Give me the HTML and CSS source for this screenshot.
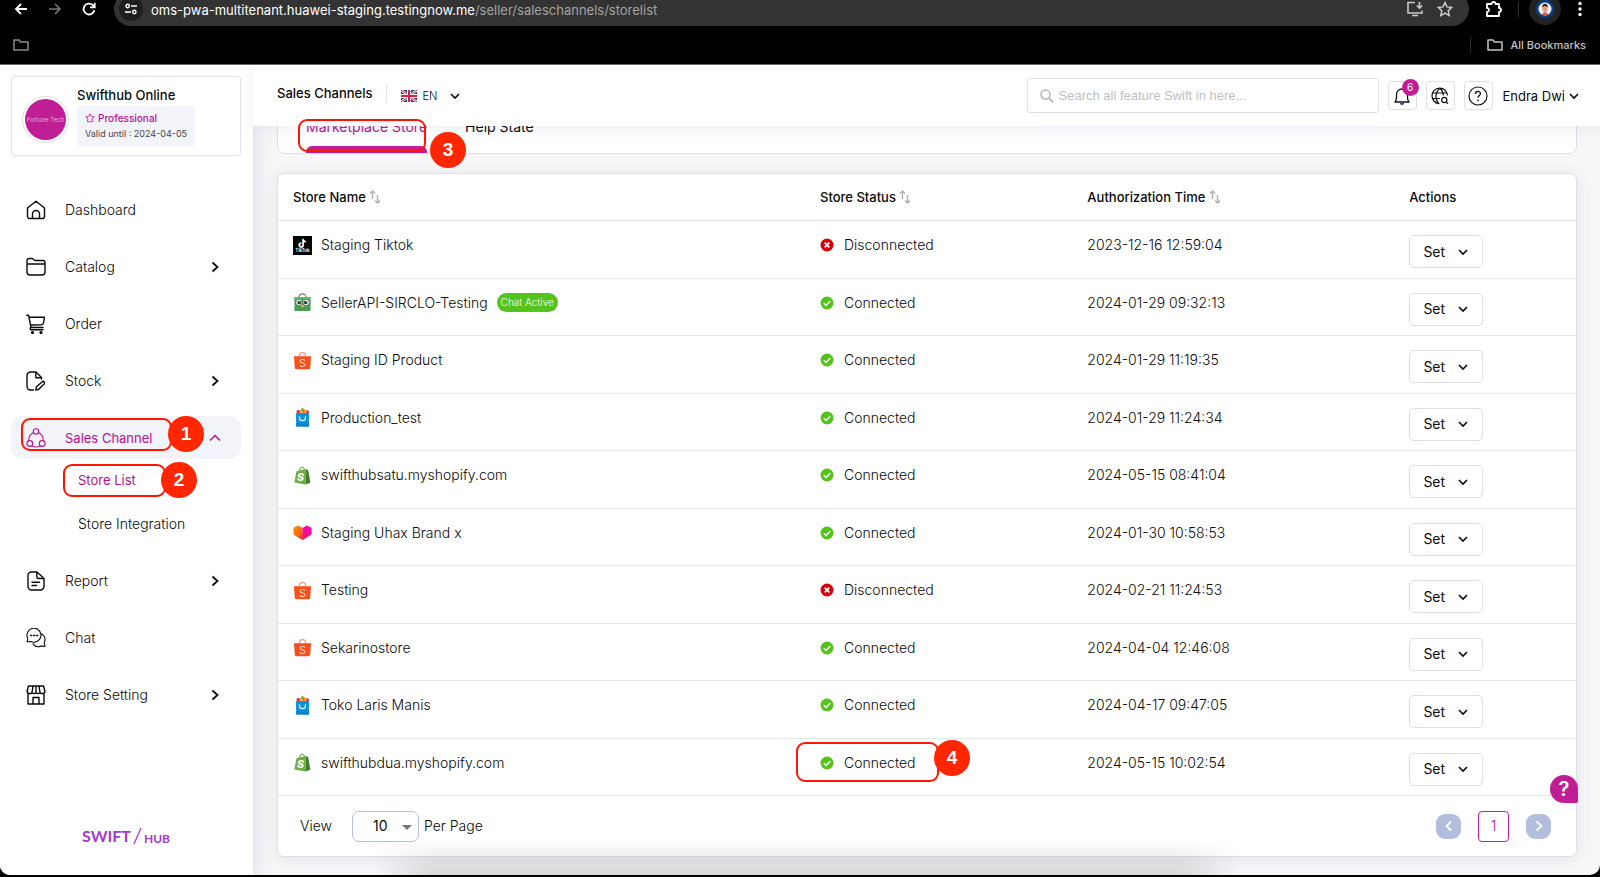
FILE: index.html
```html
<!DOCTYPE html>
<html lang="en">
<head>
<meta charset="utf-8">
<title>Sales Channels</title>
<link rel="stylesheet" href="styles.css">
</head>
<body>
<svg class="defs" aria-hidden="true">
  <defs>
    <linearGradient id="heart-left" x1="0" y1="0" x2="1" y2="1"><stop offset="0" stop-color="#ff9500"/><stop offset="1" stop-color="#f5450c"/></linearGradient>
    <linearGradient id="heart-right" x1="1" y1="0" x2="0" y2="1"><stop offset="0" stop-color="#ff00c8"/><stop offset="1" stop-color="#f0147a"/></linearGradient>
    <symbol id="chev-down" viewBox="0 0 12 12"><path d="M2 4l4 4 4-4" fill="none" stroke="currentColor" stroke-width="1.6"/></symbol>
    <symbol id="chev-right" viewBox="0 0 12 12"><path d="M3.5 1.5L8.500 6l-5 4.500" fill="none" stroke="currentColor" stroke-width="1.8"/></symbol>
    <symbol id="chev-left" viewBox="0 0 12 12"><path d="M8 1.500L3.500 6 8 10.500" fill="none" stroke="currentColor" stroke-width="1.800"/></symbol>
    <symbol id="chev-up" viewBox="0 0 12 12"><path d="M1 8.500l5-5 5 5" fill="none" stroke="currentColor" stroke-width="1.500"/></symbol>
    <symbol id="folder" viewBox="0 0 16 12"><path d="M1 1h5l1.500 2H15v8H1z" fill="none" stroke="currentColor" stroke-width="1.500" stroke-linejoin="round"/></symbol>
    <symbol id="sort" viewBox="0 0 12 16"><path d="M3.500 10V2M1 4.500L3.500 2 6 4.500M8.500 6v8M6 11.500L8.500 14l2.500-2.500" fill="none" stroke="currentColor" stroke-width="1.400"/></symbol>
    <symbol id="ok" viewBox="0 0 14 14"><circle cx="7" cy="7" r="6.500" fill="#52c41a"/><path d="M3.800 7.200l2.300 2.200 4.200-4.300" fill="none" stroke="#fff" stroke-width="1.500"/></symbol>
    <symbol id="bad" viewBox="0 0 14 14"><circle cx="7" cy="7" r="6.500" fill="#d9000d"/><path d="M4.700 4.700l4.600 4.600M9.300 4.700L4.700 9.300" fill="none" stroke="#fff" stroke-width="1.800"/></symbol>
    <symbol id="tiktok" viewBox="0 0 20 20"><rect width="20" height="20" fill="#000"/><path d="M10.300 3v6.300a2 2 0 1 1-2-2M10.300 3.300c.3 1.500 1.200 2.300 2.700 2.400" fill="none" stroke="#25f4ee" stroke-width="1.400"/><path d="M11 3.600v6.300a2 2 0 1 1-2-2M11 3.900c.3 1.500 1.200 2.300 2.700 2.400" fill="none" stroke="#fe2c55" stroke-width="1.400"/><path d="M10.700 3.300v6.300a2 2 0 1 1-2-2M10.700 3.600c.3 1.500 1.200 2.300 2.700 2.400" fill="none" stroke="#fff" stroke-width="1.400"/><text x="10" y="17" text-anchor="middle" font-family="Inter, sans-serif" font-size="4.500" font-weight="700" fill="#fff">TikTok</text></symbol>
    <symbol id="tokopedia" viewBox="0 0 20 20"><path d="M6 5a4 4 0 0 1 8 0" fill="none" stroke="#6b7a6b" stroke-width="1.300"/><path d="M1.500 4.500h17V17a2 2 0 0 1-2 2h-15z" fill="#46a053"/><path d="M1.500 4.500c4 0 6.500 0 8.500 1.800 2-1.800 4.500-1.800 8.500-1.800v3h-17z" fill="#5fb76a"/><circle cx="6.200" cy="10" r="3.300" fill="#fff" stroke="#52615a" stroke-width=".8"/><circle cx="13.800" cy="10" r="3.300" fill="#fff" stroke="#52615a" stroke-width=".8"/><circle cx="6.600" cy="10" r="1.900" fill="#222"/><circle cx="13.400" cy="10" r="1.900" fill="#222"/><circle cx="7.200" cy="9.300" r=".6" fill="#fff"/><circle cx="14" cy="9.300" r=".6" fill="#fff"/><path d="M8.300 13.500L10 12l1.700 1.500L10 15.500z" fill="#f5b94b"/></symbol>
    <symbol id="shopee" viewBox="0 0 20 20"><path d="M6.500 6c0-5.800 7-5.800 7 0" fill="none" stroke="#f79a76" stroke-width="1.200"/><path d="M1 5.500h18l-.9 12.200a1.800 1.800 0 0 1-1.800 1.600H3.700a1.800 1.800 0 0 1-1.800-1.600z" fill="#f4511e"/><text x="10" y="16.500" text-anchor="middle" font-family="Inter, sans-serif" font-size="11.500" fill="#ffe9df">S</text></symbol>
    <symbol id="blibli" viewBox="0 0 20 20"><path d="M4 5V3l2-1 1.500 1.500L9 .5l2.500.2L13 3l2-.8 1.500 1.500V5z" fill="#f0542c"/><circle cx="10" cy="2" r="1.700" fill="#6abf2e"/><circle cx="5.300" cy="3.800" r="1.400" fill="#e61a5f"/><circle cx="9" cy="4.200" r="1.200" fill="#ffd21f"/><circle cx="13" cy="3.800" r="1.400" fill="#ff9d14"/><circle cx="15.500" cy="4" r="1.200" fill="#e61a5f"/><path d="M3 5.200h14V19.500H3.400z" fill="#0b93dc"/><path d="M3.300 16h13.600v3.500H3.400z" fill="#0a82ca"/><path d="M6.900 8.800v1.500a3.100 3.100 0 0 0 6.200 0V8.800" fill="none" stroke="#d9f1ff" stroke-width="1.300"/></symbol>
    <symbol id="shopify" viewBox="0 0 20 20"><path d="M6.500 6C7 2.500 9 .7 10.500 1.300 12 2 12 4 12 5" fill="none" stroke="#7fb25a" stroke-width="1.200"/><path d="M3.600 5.500L13.500 3.200 13 19.500 1.500 17.300z" fill="#6fae45"/><path d="M13.500 3.200l2.500 1.300 2.300 13.200-5.300 1.800z" fill="#3f8030"/><text x="7.900" y="15.500" text-anchor="middle" font-family="Inter, sans-serif" font-size="11" font-weight="800" font-style="italic" fill="#fff">S</text></symbol>
    <symbol id="lazada" viewBox="0 0 20 20"><path d="M.5 5L5.500 2.500 10 5.200V18L1.200 12.500Q.5 12 .5 11z" fill="url(#heart-left)"/><path d="M19.500 5l-5-2.500L10 5.200V18l8.800-5.500q.7-.5.700-1.500z" fill="url(#heart-right)"/><path d="M10 10.500L14.500 8v7.200L10 18l-4.500-2.800z" fill="#ee1650" opacity=".45"/></symbol>
  </defs>
</svg>

<div class="browser">
  <div class="toolbar">
    <button class="tool back" aria-label="Back"><svg width="14" height="14" viewBox="0 0 14 14"><path d="M13 7H2M7 2L2 7l5 5" fill="none" stroke="currentColor" stroke-width="1.800"/></svg></button>
    <button class="tool dim" aria-label="Forward"><svg width="14" height="14" viewBox="0 0 14 14"><path d="M1 7h11M7 2l5 5-5 5" fill="none" stroke="currentColor" stroke-width="1.600"/></svg></button>
    <button class="tool" aria-label="Reload"><svg width="14" height="14" viewBox="0 0 14 14"><path d="M12.300 8.200A5.400 5.400 0 1 1 10.800 3.200L12.500 5M12.700.8v4.600H8" fill="none" stroke="currentColor" stroke-width="1.800"/></svg></button>
    <div class="address">
      <button class="tune" aria-label="Site information"><svg width="12" height="12" viewBox="0 0 12 12"><g fill="none" stroke="currentColor" stroke-width="1.400"><circle cx="2.700" cy="3" r="1.700"/><path d="M6 3h6M0 9h6"/><circle cx="9.300" cy="9" r="1.700"/></g></svg></button>
      <span class="url">oms-pwa-multitenant.huawei-staging.testingnow.me<span class="path">/seller/saleschannels/storelist</span></span>
      <button class="tool soft" aria-label="Install"><svg width="18" height="16" viewBox="0 0 18 16"><path d="M9 1.500H2v10.500h14V9.500M6 14.500h6M13.500 1v6M10.800 4.500l2.700 2.700 2.700-2.700" fill="none" stroke="currentColor" stroke-width="1.600"/></svg></button>
      <button class="tool soft" aria-label="Bookmark"><svg width="16" height="16" viewBox="0 0 16 16"><path d="M8 1.500l2 4.400 4.800.5-3.600 3.200 1 4.800L8 12l-4.200 2.400 1-4.800L1.200 6.400 6 5.900z" fill="none" stroke="currentColor" stroke-width="1.500"/></svg></button>
    </div>
    <button class="tool puzzle" aria-label="Extensions"><svg width="18" height="18" viewBox="0 0 18 18"><path d="M2 4h4.500a2 2 0 0 1 4 0H14v4a2 2 0 0 1 0 4v4H2v-4a2 2 0 0 0 0-4z" fill="none" stroke="currentColor" stroke-width="1.800" stroke-linejoin="round"/></svg></button>
    <span class="bar"></span>
    <button class="account" aria-label="Account"><svg width="20" height="20" viewBox="0 0 20 20"><circle cx="10" cy="10" r="9.500" fill="#0d3b78"/><circle cx="10" cy="10" r="6.500" fill="#f4f6fa"/><path d="M7 15.500c.5-3 5.500-3 6 0a6.500 6.500 0 0 1-6 0z" fill="#e2543a"/><ellipse cx="10" cy="9.500" rx="2.600" ry="3.600" fill="#d99a78"/><path d="M7 8.500c-.3-5 6.300-5 6 0-1-2-5-2-6 0z" fill="#2b1c1c"/></svg></button>
    <button class="tool menu" aria-label="Menu"><svg width="4" height="16" viewBox="0 0 4 16"><g fill="currentColor"><circle cx="2" cy="2.500" r="1.700"/><circle cx="2" cy="8" r="1.700"/><circle cx="2" cy="13.500" r="1.700"/></g></svg></button>
  </div>
  <div class="bookmarks">
    <button class="bm" aria-label="Folder"><svg width="16" height="12"><use href="#folder"/></svg></button>
    <button class="bm all"><svg width="16" height="12"><use href="#folder"/></svg>All Bookmarks</button>
  </div>
</div>

<div class="app">
  <aside class="sidebar">
    <div class="profile">
      <div class="avatar"><span>Fortune Tech</span></div>
      <div class="who">
        <div class="shop">Swifthub Online</div>
        <div class="plan">
          <div class="tier"><svg width="10" height="10" viewBox="0 0 10 10"><path d="M5 .8l1.300 2.600 2.900.4-2.100 2 .5 2.900H2.400l.5-2.900-2.100-2 2.900-.4z" fill="none" stroke="currentColor" stroke-width=".8"/></svg>Professional</div>
          <div class="valid">Valid until : 2024-04-05</div>
        </div>
      </div>
    </div>

    <nav class="nav">
      <a class="item" href="#"><svg class="ico" viewBox="0 0 20 20"><path d="M1.500 8L10 1.200 18.500 8v8.500a2 2 0 0 1-2 2h-13a2 2 0 0 1-2-2zM6.500 18.500V14a3.500 3.500 0 0 1 7 0v4.500"/></svg><span>Dashboard</span></a>
      <a class="item" href="#"><svg class="ico" viewBox="0 0 20 20"><path d="M1 6V3.500a2 2 0 0 1 2-2h3.500L9 3.500h8a2 2 0 0 1 2 2V15a3 3 0 0 1-3 3H4a3 3 0 0 1-3-3V7h18"/></svg><span>Catalog</span><svg class="arrow"><use href="#chev-right"/></svg></a>
      <a class="item" href="#"><svg class="ico" viewBox="0 0 20 20"><path d="M.8 1.200h1.700L5 13.500h12M3.200 3.200h15.300l-1 5.800q-.3 1.600-2 1.700L4.800 11M5 13.500a1.200 1.200 0 0 0 0 2.300h12"/><circle cx="6.500" cy="18.500" r=".9" fill="currentColor"/><circle cx="15" cy="18.500" r=".9" fill="currentColor"/></svg><span>Order</span></a>
      <a class="item" href="#"><svg class="ico" viewBox="0 0 20 20"><path d="M7.500 19H4.500a3.500 3.500 0 0 1-3.500-3.500v-11A3.500 3.500 0 0 1 4.500 1H10l5.500 5.500V8M9.800 1v5.700h5.700M16.800 10.200q2.500.5 1.500 2.500l-5.500 5.500-3 .8.500-3z"/></svg><span>Stock</span><svg class="arrow"><use href="#chev-right"/></svg></a>
      <a class="item active" href="#"><svg class="ico thin" viewBox="0 0 20 20"><circle cx="10" cy="3.500" r="2.700"/><circle cx="3.800" cy="15.500" r="2.900"/><circle cx="16.200" cy="15.500" r="2.900"/><path d="M7.500 4.500Q2.500 7 2.800 12.500M12.500 4.500q5 2.500 4.700 8M6 18q4 2 8 0"/></svg><span>Sales Channel</span><svg class="arrow"><use href="#chev-up"/></svg><span class="ring ring-1"></span><span class="num num-1">1</span></a>
      <a class="sub on" href="#">Store List<span class="ring ring-2"></span><span class="num num-2">2</span></a>
      <a class="sub" href="#">Store Integration</a>
      <a class="item after" href="#"><svg class="ico" viewBox="0 0 20 20"><path d="M2 4.500A3.500 3.500 0 0 1 5.500 1H11l7 6.500v8a3.500 3.500 0 0 1-3.500 3.500h-9A3.500 3.500 0 0 1 2 15.500zM10.800 1v4.500a2 2 0 0 0 2 2H18M6 11.200h7.500M6 14.500h4.500"/></svg><span>Report</span><svg class="arrow"><use href="#chev-right"/></svg></a>
      <a class="item" href="#"><svg class="ico thin" viewBox="0 0 20 20"><path d="M1.200 13.800l.6-3.300A7 7 0 1 1 8 14.200c-2 0-3-.4-3.500-.6zM15.500 6a6 6 0 0 1 2.700 8.500l.8 4-4-.6a6.500 6.500 0 0 1-8-2"/><path d="M4.700 7.500h1M7.700 7.500h1M10.700 7.500h1" stroke-width="1.600"/></svg><span>Chat</span></a>
      <a class="item" href="#"><svg class="ico" viewBox="0 0 20 20"><path d="M2.500 1h15L19 6.500a2.800 2.800 0 0 1-4.800 1.200 3.400 3.400 0 0 1-4.200 0 3.400 3.400 0 0 1-4.200 0A2.800 2.800 0 0 1 1 6.500zM2 8.500V19h16V8.500M7 19v-6.500h6V19M7 1l-1 6.500M13 1l1 6.500M10 1v6.500"/></svg><span>Store Setting</span><svg class="arrow"><use href="#chev-right"/></svg></a>
    </nav>

    <div class="brand"><span class="brand-a">SWIFT</span><svg width="9" height="18" viewBox="0 0 9 18"><path d="M8 1L1 17" stroke="#a43ccb" stroke-width="1.300"/></svg><span class="brand-b">HUB</span></div>
  </aside>

  <main class="main">
    <header class="top">
      <h1 class="title">Sales Channels</h1>
      <button class="lang"><svg width="16" height="12" viewBox="0 0 16 12"><rect width="16" height="12" fill="#1f3a86"/><path d="M0 0l16 12M16 0L0 12" stroke="#fff" stroke-width="2.400"/><path d="M0 0l16 12M16 0L0 12" stroke="#d8203a" stroke-width="1"/><path d="M8 0v12M0 6h16" stroke="#fff" stroke-width="4"/><path d="M8 0v12M0 6h16" stroke="#d8203a" stroke-width="2.200"/></svg><span>EN</span><svg class="down" width="12" height="12"><use href="#chev-down"/></svg></button>
      <label class="search"><svg width="14" height="14" viewBox="0 0 14 14"><circle cx="5.500" cy="5.500" r="4.500" fill="none" stroke="#b5b5b5" stroke-width="1.500"/><path d="M9 9l4.300 4.300" stroke="#b5b5b5" stroke-width="1.800"/></svg><input type="text" aria-label="Search" placeholder="Search all feature Swift in here..."></label>
      <button class="square" aria-label="Notifications"><svg width="18" height="20" viewBox="0 0 18 20"><path d="M2 16q1.500-2 1.500-4.500V8.500a5.500 5.500 0 0 1 11 0v3Q14.500 14 16 16z" fill="none" stroke="#111" stroke-width="1.300" stroke-linejoin="round"/><path d="M7 17.500q2 2.500 4 0z" fill="#7a3cff" stroke="#4a20a0" stroke-width=".8"/></svg><span class="count">6</span></button>
      <button class="square" aria-label="Region"><svg width="18" height="18" viewBox="0 0 18 18"><g fill="none" stroke="#111" stroke-width="1.200"><path d="M8.500 16.700A7.800 7.800 0 1 1 16.600 8.500M1.500 6h15M1.500 11.500H9M8.800 1.200Q1.800 8.500 7.500 16.700M9 1.200q3.200 3 3.400 7.300"/><circle cx="13.300" cy="13" r="2.600"/><path d="M15.200 14.800l1.800 2"/></g></svg></button>
      <button class="square" aria-label="Help"><svg width="20" height="20" viewBox="0 0 20 20"><circle cx="10" cy="10" r="9" fill="none" stroke="#111" stroke-width="1.200"/><path d="M7.500 8c0-3.500 5-3.300 5-.4 0 1.900-2.500 2-2.500 4.200" fill="none" stroke="#111" stroke-width="1.300"/><circle cx="10" cy="14.300" r=".9" fill="#111"/></svg></button>
      <button class="user">Endra Dwi<svg width="12" height="12"><use href="#chev-down"/></svg></button>
    </header>

    <div class="content">
      <div class="tabs">
        <button class="tab on">Marketplace Store</button>
        <button class="tab">Help State</button>
      </div>

      <section class="card">
        <table class="stores">
          <colgroup><col class="c-name"><col class="c-status"><col class="c-time"><col class="c-act"></colgroup>
          <thead>
            <tr><th>Store Name <svg class="sort"><use href="#sort"/></svg></th><th>Store Status <svg class="sort"><use href="#sort"/></svg></th><th>Authorization Time <svg class="sort"><use href="#sort"/></svg></th><th>Actions</th></tr>
          </thead>
          <tbody>
            <tr><td><div class="line"><svg class="logo"><use href="#tiktok"/></svg>Staging Tiktok</div></td><td><div class="line state"><svg class="dot"><use href="#bad"/></svg>Disconnected</div></td><td><div class="line">2023-12-16 12:59:04</div></td><td><button class="set">Set<svg width="12" height="12"><use href="#chev-down"/></svg></button></td></tr>
            <tr><td><div class="line"><svg class="logo"><use href="#tokopedia"/></svg>SellerAPI-SIRCLO-Testing<span class="chip">Chat Active</span></div></td><td><div class="line state"><svg class="dot"><use href="#ok"/></svg>Connected</div></td><td><div class="line">2024-01-29 09:32:13</div></td><td><button class="set">Set<svg width="12" height="12"><use href="#chev-down"/></svg></button></td></tr>
            <tr><td><div class="line"><svg class="logo"><use href="#shopee"/></svg>Staging ID Product</div></td><td><div class="line state"><svg class="dot"><use href="#ok"/></svg>Connected</div></td><td><div class="line">2024-01-29 11:19:35</div></td><td><button class="set">Set<svg width="12" height="12"><use href="#chev-down"/></svg></button></td></tr>
            <tr><td><div class="line"><svg class="logo"><use href="#blibli"/></svg>Production_test</div></td><td><div class="line state"><svg class="dot"><use href="#ok"/></svg>Connected</div></td><td><div class="line">2024-01-29 11:24:34</div></td><td><button class="set">Set<svg width="12" height="12"><use href="#chev-down"/></svg></button></td></tr>
            <tr><td><div class="line"><svg class="logo"><use href="#shopify"/></svg>swifthubsatu.myshopify.com</div></td><td><div class="line state"><svg class="dot"><use href="#ok"/></svg>Connected</div></td><td><div class="line">2024-05-15 08:41:04</div></td><td><button class="set">Set<svg width="12" height="12"><use href="#chev-down"/></svg></button></td></tr>
            <tr><td><div class="line"><svg class="logo"><use href="#lazada"/></svg>Staging Uhax Brand x</div></td><td><div class="line state"><svg class="dot"><use href="#ok"/></svg>Connected</div></td><td><div class="line">2024-01-30 10:58:53</div></td><td><button class="set">Set<svg width="12" height="12"><use href="#chev-down"/></svg></button></td></tr>
            <tr><td><div class="line"><svg class="logo"><use href="#shopee"/></svg>Testing</div></td><td><div class="line state"><svg class="dot"><use href="#bad"/></svg>Disconnected</div></td><td><div class="line">2024-02-21 11:24:53</div></td><td><button class="set">Set<svg width="12" height="12"><use href="#chev-down"/></svg></button></td></tr>
            <tr><td><div class="line"><svg class="logo"><use href="#shopee"/></svg>Sekarinostore</div></td><td><div class="line state"><svg class="dot"><use href="#ok"/></svg>Connected</div></td><td><div class="line">2024-04-04 12:46:08</div></td><td><button class="set">Set<svg width="12" height="12"><use href="#chev-down"/></svg></button></td></tr>
            <tr><td><div class="line"><svg class="logo"><use href="#blibli"/></svg>Toko Laris Manis</div></td><td><div class="line state"><svg class="dot"><use href="#ok"/></svg>Connected</div></td><td><div class="line">2024-04-17 09:47:05</div></td><td><button class="set">Set<svg width="12" height="12"><use href="#chev-down"/></svg></button></td></tr>
            <tr><td><div class="line"><svg class="logo"><use href="#shopify"/></svg>swifthubdua.myshopify.com</div></td><td><div class="line state"><svg class="dot"><use href="#ok"/></svg>Connected<span class="ring ring-4"></span><span class="num num-4">4</span></div></td><td><div class="line">2024-05-15 10:02:54</div></td><td><button class="set">Set<svg width="12" height="12"><use href="#chev-down"/></svg></button></td></tr>
          </tbody>
        </table>
        <div class="foot">
          <label for="per-page">View</label>
          <span class="pick"><select id="per-page"><option>10</option></select></span>
          <span class="per">Per Page</span>
          <div class="pager">
            <button class="step" aria-label="Previous"><svg width="12" height="12"><use href="#chev-left"/></svg></button>
            <button class="page">1</button>
            <button class="step" aria-label="Next"><svg width="12" height="12"><use href="#chev-right"/></svg></button>
          </div>
        </div>
      </section>
    </div>
    <span class="ring ring-3"></span><span class="num num-3">3</span>
    <button class="bubble" aria-label="Help chat">?</button>
    <div class="shade"></div>
  </main>
</div>
</body>
</html>
```
FILE: styles.css
```css
* { box-sizing: border-box; }

html, body { height: 100%; }

body {
  margin: 0;
  display: flex;
  flex-direction: column;
  background: #000;
  color: #0a0a0a;
  font-family: Inter, "Open Sans", sans-serif;
  font-size: 14px;
  line-height: 20px;
  overflow: hidden;
}

button, input, select { font: inherit; color: inherit; }
button { background: none; border: 0; padding: 0; display: flex; align-items: center; justify-content: center; }
a { color: inherit; text-decoration: none; }
svg { flex: none; display: block; }
.defs { position: absolute; width: 0; height: 0; }

/* Browser frame */
.browser { flex: none; height: 65px; overflow: hidden; border-bottom: 1px solid #6b6b6b; }
.toolbar { height: 34px; margin-top: -8px; display: flex; align-items: center; padding: 0 18px 0 14px; color: #fff; }
.tool { width: 14px; margin-right: 20px; }
.dim { color: #777; }
.address { flex: 1; height: 34px; border-radius: 17px; background: #333; display: flex; align-items: center; padding: 0 15px 0 5px; margin: 0 16px 0 -2px; }
.tune { width: 24px; height: 24px; border-radius: 50%; background: #1e1e1e; margin-right: 8px; }
.url { flex: 1; font-size: 13px; padding-top: 1px; }
.path { color: #a3a3a3; }
.soft { width: 18px; margin: 0 0 0 12px; color: #c9c9c9; }
.puzzle { width: 18px; margin-right: 15px; }
.bar { width: 1px; height: 16px; background: #2e2e2e; margin-right: 10px; }
.account { width: 32px; height: 32px; border-radius: 50%; background: #222; margin-right: 17px; }
.menu { width: 4px; margin: 0; }
.bookmarks { height: 38px; display: flex; align-items: center; justify-content: space-between; padding: 0 14px 0 13px; }
.bm { color: #8c8c8c; gap: 8px; font-size: 11px; }
.all { color: #c4c4c4; border-left: 1px solid #2a2a2a; padding-left: 16px; font-weight: 500; height: 16px; }

/* Page */
.app { flex: 1; min-height: 0; display: flex; margin-bottom: 2px; border-radius: 0 0 10px 10px; overflow: hidden; background: #f7f7f8; }
.sidebar { flex: none; width: 253px; background: #fff; padding: 11px 12px 28px 11px; display: flex; flex-direction: column; z-index: 1; box-shadow: 0 0 16px 4px #e0e0ee; }

.profile { height: 80px; border: 1px solid #dfe3e8; border-radius: 3px; display: flex; align-items: flex-start; padding: 8px 10px; gap: 8px; }
.avatar { width: 47px; height: 47px; margin-top: 11px; border: 1px solid #ddd; border-radius: 50%; padding: 2px; flex: none; }
.avatar span { display: flex; align-items: center; justify-content: center; height: 100%; border-radius: 50%; background: #bf1e94; color: #eba9d9; font-size: 6px; line-height: 8px; white-space: nowrap; }
.shop { font-size: 13px; font-weight: 500; line-height: 20px; }
.plan { background: #f3f3fa; border-radius: 4px; padding: 4px 8px; margin-top: 1px; }
.tier { display: flex; gap: 3px; align-items: center; color: #b5128c; font-size: 10px; line-height: 16px; font-weight: 500; }
.valid { color: #444; font-size: 9px; line-height: 16px; white-space: nowrap; }

.nav { margin-top: 32px; display: flex; flex-direction: column; }
.item { height: 43px; margin-bottom: 14px; padding: 0 20px 0 15px; display: flex; align-items: center; gap: 19px; position: relative; border-radius: 12px; font-weight: 300; }
.item.active { background: #f3f3fa; margin-bottom: 0; color: #b5128c; font-weight: 400; font-size: 13px; }
.item.after { margin-top: 14px; }
.ico { width: 20px; height: 20px; fill: none; stroke: currentColor; stroke-width: 1.4; stroke-linejoin: round; stroke-linecap: round; }
.thin { stroke-width: 1.1; }
.arrow { width: 12px; height: 12px; margin-left: auto; }
.sub { height: 43px; padding-left: 67px; line-height: 43px; position: relative; font-weight: 300; }
.sub.on { color: #b5128c; font-weight: 400; font-size: 13px; }
.brand { margin-top: auto; display: flex; justify-content: center; align-items: center; color: #a43ccb; font-family: Lato, sans-serif; }
.brand-a { font-size: 16px; font-weight: 700; margin-right: 2px; }
.brand-b { font-size: 12px; font-weight: 700; padding-top: 7px; line-height: 16px; margin-left: 2px; }

.main { flex: 1; min-width: 0; display: flex; flex-direction: column; position: relative; }
.top { flex: none; height: 61px; background: #fff; display: flex; align-items: center; padding: 0 20px 0 24px; box-shadow: 0 4px 14px rgba(90, 90, 160, .08); position: relative; z-index: 2; }
.title { margin: 0 0 5px; padding-right: 14px; font-size: 13px; font-weight: 500; line-height: 20px; border-right: 1px solid #e3e3e8; white-space: nowrap; }
.lang { gap: 5px; margin-left: 14px; font-size: 11px; font-weight: 300; }
.down { margin-left: 7px; }
.search { margin-left: auto; flex: 0 1 352px; height: 35px; border: 1px solid #dcdfe4; border-radius: 3px; display: flex; align-items: center; gap: 5px; padding: 0 12px; }
.search input { flex: 1; min-width: 0; border: 0; outline: 0; padding: 0; font-family: "Liberation Sans", sans-serif; font-size: 13px; }
.search input::placeholder { color: #bfbfbf; }
.square { width: 29px; height: 29px; border: 1px solid #dcdfe4; border-radius: 4px; margin-left: 9px; position: relative; }
.count { position: absolute; left: 13px; top: -3px; width: 17px; height: 17px; border-radius: 50%; background: #bf1e94; color: #fff; font-size: 10px; line-height: 17px; text-align: center; }
.user { margin-left: 10px; gap: 3px; font-size: 13px; white-space: nowrap; }

.content { flex: 1; min-height: 0; display: flex; flex-direction: column; padding: 0 23px 18px 24px; overflow: hidden; }
.tabs { flex: none; height: 56px; margin: -28px 0 19px; background: #fff; border: 1px solid #dcdfe4; border-radius: 8px; display: flex; gap: 38px; padding: 0 28px; }
.tab { font-weight: 400; border-bottom: 7px solid transparent; padding-top: 8px; }
.tab.on { color: #b5128c; position: relative; }
.tab.on::after { content: ""; position: absolute; left: 0; right: 0; bottom: -7px; height: 7px; border-radius: 6px 6px 0 0; background: #bf1e94; }

.card { flex: 1; min-height: 0; background: #fff; border: 1px solid #dcdfe4; border-radius: 7px; box-shadow: 0 2px 16px #e3e3ec; display: flex; flex-direction: column; }
.stores { flex: 1; width: 100%; table-layout: fixed; border-collapse: separate; border-spacing: 0; }
.c-name { width: 40.6%; }
.c-status { width: 20.6%; }
.c-time { width: 24.8%; }
.c-act { width: 14%; }
.stores th { height: 47px; padding: 0 15px; text-align: left; font-size: 13px; font-weight: 500; border-bottom: 1px solid #dfe2e5; }
.stores td { height: 57px; padding: 14px 15px 9px; vertical-align: top; border-bottom: 1px solid #e4e6e8; font-weight: 300; }
.sort { display: inline-block; width: 12px; height: 16px; color: #b0b0b0; vertical-align: -3px; }
.line { display: flex; align-items: center; height: 20px; position: relative; white-space: nowrap; }
.logo { width: 19px; height: 19px; margin-right: 9px; }
.dot { width: 14px; height: 14px; margin-right: 10px; }
.chip { background: #52c41a; color: #fff; font-size: 10px; font-weight: 300; line-height: 19px; padding: 0 4px; border-radius: 10px; margin-left: 9px; }
.set { width: 74px; height: 33px; border: 1px solid #dcdfe4; border-radius: 5px; gap: 12px; font-weight: 400; }

.foot { flex: none; height: 60px; display: flex; align-items: center; padding: 0 25px 0 22px; font-weight: 300; }
.pick { margin: 0 5px 0 20px; position: relative; }
.pick::after { content: ""; position: absolute; right: 7px; top: 14px; border: 5px solid transparent; border-top-color: #777; border-bottom: 0; }
.pick select { appearance: none; display: block; width: 67px; height: 31px; border: 1px solid #b4c0de; border-radius: 7px; background: #fff; padding-left: 20px; font-weight: 400; }
.pager { margin-left: auto; display: flex; align-items: center; gap: 17px; }
.step { width: 25px; height: 25px; border-radius: 9px; background: #b3bddc; color: #fff; }
.page { width: 31px; height: 31px; border: 1px solid #bf1e94; border-radius: 4px; color: #b5128c; }

/* Over the page */
.bubble { position: absolute; right: 22px; bottom: 72px; width: 28px; height: 28px; border-radius: 14px 14px 2px 14px; background: #bf1e94; color: #fff; font-size: 20px; font-weight: 600; }
.shade { position: absolute; left: 120px; right: 360px; bottom: 0; height: 36px; background: linear-gradient(to bottom, transparent, rgba(0, 0, 0, .12)); -webkit-mask-image: linear-gradient(to right, transparent, #000 60px, #000 calc(100% - 60px), transparent); mask-image: linear-gradient(to right, transparent, #000 60px, #000 calc(100% - 60px), transparent); pointer-events: none; }

.ring { position: absolute; border: 2px solid #ff1500; border-radius: 9px; z-index: 3; }
.num { position: absolute; width: 36px; height: 36px; border-radius: 50%; background: #ff2600; color: #fff; font: 700 19px/36px "Liberation Sans", sans-serif; text-align: center; z-index: 3; }
.ring-1 { left: 10px; top: 2px; width: 151px; height: 33px; }
.num-1 { left: 157px; top: 0; }
.ring-2 { left: 52px; top: 5px; width: 103px; height: 33px; }
.num-2 { left: 150px; top: 3px; }
.ring-3 { left: 45px; top: 54px; width: 128px; height: 33px; }
.num-3 { left: 177px; top: 67px; }
.ring-4 { left: -24px; top: -11px; width: 143px; height: 40px; }
.num-4 { left: 114px; top: -13px; }
```
